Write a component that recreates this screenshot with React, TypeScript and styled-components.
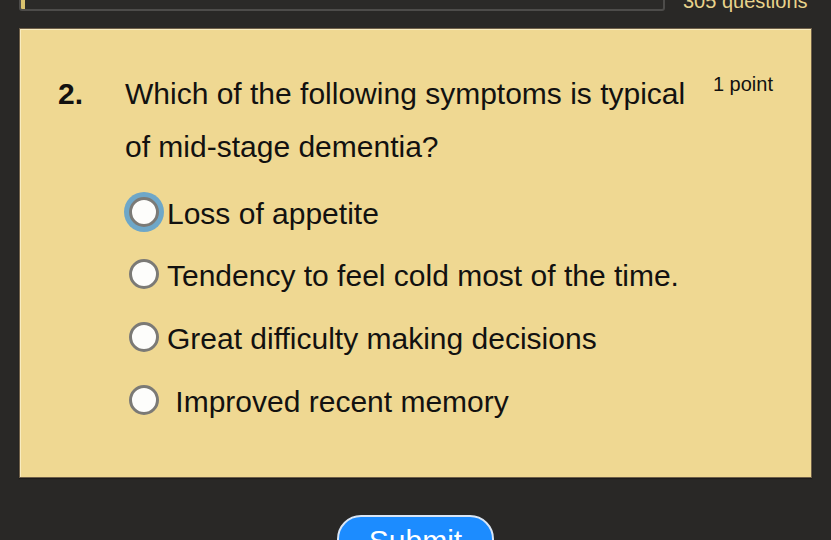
import React, { useState } from 'react';
import styled, { createGlobalStyle } from 'styled-components';

const GlobalStyle = createGlobalStyle`
  html, body {
    margin: 0;
    padding: 0;
    background: #292826;
    overflow: hidden;
  }
  body {
    font-family: "Liberation Sans", Arial, sans-serif;
  }
`;

interface Option {
  id: string;
  label: string;
}

const options: Option[] = [
  { id: 'a', label: 'Loss of appetite' },
  { id: 'b', label: 'Tendency to feel cold most of the time.' },
  { id: 'c', label: 'Great difficulty making decisions' },
  { id: 'd', label: ' Improved recent memory' },
];

const App: React.FC = () => {
  const [focused] = useState('a');
  const [selected, setSelected] = useState<string | null>(null);

  return (
    <Page>
      <GlobalStyle />
      <Header>
        <Progress>
          <ProgressFill style={{ width: `${(2 / 305) * 100}%` }} />
        </Progress>
        <Count>305 questions</Count>
      </Header>

      <Card>
        <Number>2.</Number>
        <Body>
          <Question>Which of the following symptoms is typical of mid-stage dementia?</Question>
          <OptionList>
            {options.map((o) => (
              <OptionRow key={o.id} onClick={() => setSelected(o.id)}>
                <Radio $focused={focused === o.id} $checked={selected === o.id} />
                <OptionText>{o.label}</OptionText>
              </OptionRow>
            ))}
          </OptionList>
        </Body>
        <Points>1 point</Points>
      </Card>

      <Footer>
        <SubmitButton>Submit</SubmitButton>
      </Footer>
    </Page>
  );
};

const Page = styled.div`
  padding: 0 19px 0 19px;
`;

const Header = styled.div`
  display: flex;
  align-items: flex-end;
  gap: 18px;
  height: 34px;
  margin-top: -23px;
`;

const Progress = styled.div`
  flex: 0 0 646px;
  height: 30px;
  box-sizing: border-box;
  border: 2px solid #4d4c4a;
  border-radius: 3px;
  background: #2b2a28;
  overflow: hidden;
`;

const ProgressFill = styled.div`
  height: 100%;
  background: #d9c26e;
`;

const Count = styled.div`
  font-size: 20px;
  color: #e8d38c;
  line-height: 23px;
  margin-bottom: -2px;
  white-space: nowrap;
`;

const Card = styled.div`
  display: grid;
  grid-template-columns: 67px 576px 1fr;
  margin-top: 17px;
  box-sizing: border-box;
  height: 450px;
  padding: 38px 38px 0 38px;
  background: #efd892;
  border: 1px solid #6e5f48;
  box-shadow: inset 1px 1px 0 #f8ecc0, 0 1px 1px #1c1b1a;
  color: #121110;
`;

const Number = styled.div`
  font-size: 30px;
  font-weight: bold;
  line-height: 53px;
`;

const Body = styled.div`
  display: flex;
  flex-direction: column;
`;

const Question = styled.div`
  font-size: 30px;
  line-height: 53px;
`;

const OptionList = styled.div`
  display: flex;
  flex-direction: column;
  margin-top: 9px;
  margin-left: 4px;
`;

const OptionRow = styled.label`
  display: flex;
  align-items: center;
  gap: 8px;
  height: 62.6px;
  cursor: pointer;
`;

const Radio = styled.span<{ $focused: boolean; $checked: boolean }>`
  flex: 0 0 auto;
  width: 30px;
  height: 30px;
  box-sizing: border-box;
  border-radius: 50%;
  background: ${(p) => (p.$checked ? 'radial-gradient(circle, #1a73e8 0 6px, #fff 7px)' : '#fdfdfb')};
  border: 3px solid #7b7a76;
  box-shadow: ${(p) => (p.$focused ? '0 0 0 5px #6ea7c8' : 'none')};
  margin-top: -3px;
`;

const OptionText = styled.span`
  font-size: 30px;
  line-height: 35px;
  white-space: pre;
`;

const Points = styled.div`
  font-size: 20px;
  line-height: 23px;
  margin-top: 6px;
  justify-self: end;
  white-space: nowrap;
`;

const Footer = styled.div`
  display: flex;
  justify-content: center;
  padding-top: 37px;
`;

const SubmitButton = styled.button`
  width: 157px;
  height: 62px;
  box-sizing: border-box;
  padding: 6px 0 0;
  align-self: flex-start;
  background: #1c8cff;
  color: #ffffff;
  border: 2px solid #d9e6f5;
  border-radius: 24px;
  font-family: "Liberation Sans", Arial, sans-serif;
  font-size: 30px;
  line-height: 35px;
  display: flex;
  justify-content: center;
  align-items: flex-start;
`;

export default App;
